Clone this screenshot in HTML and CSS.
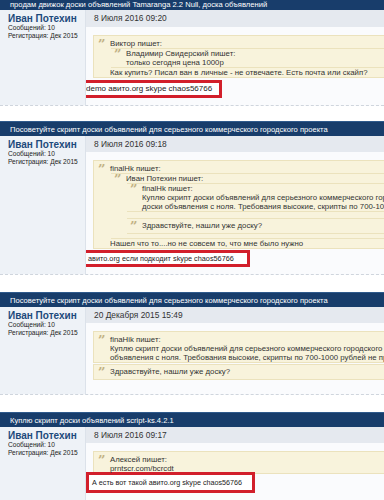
FILE: index.html
```html
<!DOCTYPE html>
<html lang="ru">
<head>
<meta charset="utf-8">
<link rel="stylesheet" href="styles.css">
</head>
<body>
<div class="page">

  <div class="post post1">
    <div class="thead thead-cut">продам движок доски объявлений Tamaranga 2.2 Null, доска объявлений</div>
    <div class="pbody">
      <div class="user">
        <div class="name">Иван Потехин</div>
        <div class="meta">Сообщений: 10</div>
        <div class="meta">Регистрация: Дек 2015</div>
      </div>
      <div class="main">
        <div class="date">8 Июля 2016 09:20</div>
        <div class="content">
          <div class="quote">
            <div class="qmark">”</div>
            <div class="qbody">
              <div class="line">Виктор пишет:</div>
              <div class="quote nested">
                <div class="qmark">”</div>
                <div class="qbody">
                  <div class="line">Владимир Свидерский пишет:</div>
                  <div class="line">только сегодня цена 1000р</div>
                </div>
              </div>
              <div class="line">Как купить? Писал ван в личные - не отвечаете. Есть почта или скайп?</div>
            </div>
          </div>
          <div class="msg msg1">demo авито.org skype chaos56766</div>
        </div>
      </div>
    </div>
  </div>

  <div class="post post2">
    <div class="thead">Посоветуйте скрипт доски объявлений для серьезного коммерческого городского проекта</div>
    <div class="pbody">
      <div class="user">
        <div class="name">Иван Потехин</div>
        <div class="meta">Сообщений: 10</div>
        <div class="meta">Регистрация: Дек 2015</div>
      </div>
      <div class="main">
        <div class="date">8 Июля 2016 09:18</div>
        <div class="content">
          <div class="quote q2">
            <div class="qmark">”</div>
            <div class="qbody">
              <div class="line">finalHk пишет:</div>
              <div class="quote nested n2">
                <div class="qmark">”</div>
                <div class="qbody">
                  <div class="line">Иван Потехин пишет:</div>
                  <div class="quote nested">
                    <div class="qmark">”</div>
                    <div class="qbody">
                      <div class="line">finalHk пишет:</div>
                      <div class="line">Куплю скрипт доски объявлений для серьезного коммерческого городского проекта</div>
                      <div class="line">доски объявления с ноля. Требования высокие, скрипты по 700-1000 рублей не предлагайте</div>
                    </div>
                  </div>
                  <div class="quote nested sep">
                    <div class="qmark">”</div>
                    <div class="qbody">
                      <div class="line">Здравствуйте, нашли уже доску?</div>
                    </div>
                  </div>
                </div>
              </div>
              <div class="line">Нашел что то....но не совсем то, что мне было нужно</div>
            </div>
          </div>
          <div class="msg msg2">авито.org если подкодит skype chaos56766</div>
        </div>
      </div>
    </div>
  </div>

  <div class="post post3">
    <div class="thead">Посоветуйте скрипт доски объявлений для серьезного коммерческого городского проекта</div>
    <div class="pbody">
      <div class="user">
        <div class="name">Иван Потехин</div>
        <div class="meta">Сообщений: 10</div>
        <div class="meta">Регистрация: Дек 2015</div>
      </div>
      <div class="main">
        <div class="date">20 Декабря 2015 15:49</div>
        <div class="content c3">
          <div class="quote q3">
            <div class="qmark">”</div>
            <div class="qbody">
              <div class="line">finaHik пишет:</div>
              <div class="line">Куплю скрипт доски объявлений для серьезного коммерческого городского проекта с</div>
              <div class="line">объявления с ноля. Требования высокие, скрипты по 700-1000 рублей не предлагайте</div>
            </div>
          </div>
          <div class="quote q3b">
            <div class="qmark">”</div>
            <div class="qbody">
              <div class="line">Здравствуйте, нашли уже доску?</div>
            </div>
          </div>
        </div>
      </div>
    </div>
  </div>

  <div class="post post4">
    <div class="thead">Куплю скрипт доски объявлений script-ks.4.2.1</div>
    <div class="pbody">
      <div class="user">
        <div class="name">Иван Потехин</div>
        <div class="meta">Сообщений: 10</div>
        <div class="meta">Регистрация: Дек 2015</div>
      </div>
      <div class="main">
        <div class="date">8 Июля 2016 09:17</div>
        <div class="content">
          <div class="quote q4">
            <div class="qmark">”</div>
            <div class="qbody">
              <div class="line">Алексей пишет:</div>
              <div class="line">prntscr.com/bcrcdt</div>
            </div>
          </div>
          <div class="msg msg4">А есть вот такой авито.org skype chaos56766</div>
        </div>
      </div>
    </div>
  </div>

</div>
</body>
</html>
```

FILE: styles.css
```css
* { box-sizing: border-box; }
html, body { margin: 0; padding: 0; background: #ffffff; }
body {
  width: 384px;
  height: 500px;
  overflow: hidden;
  font-family: "Liberation Sans", Arial, sans-serif;
  color: #2a2a2a;
}
.page { width: 384px; }

.post { margin-bottom: 15px; }
.post2 { margin-bottom: 17px; }
.post3 { margin-bottom: 17px; }

.thead {
  height: 15px;
  line-height: 15px;
  background: #183d6b;
  border-top: 1px solid #2f5a8c;
  color: #ffffff;
  font-size: 7.6px;
  padding-left: 10px;
  white-space: nowrap;
  overflow: hidden;
}
.thead-cut { height: 10px; line-height: 9px; border-top: 0; }

.pbody {
  display: grid;
  grid-template-columns: 86px 1fr;
  background: #fafbfd;
  border-bottom: 1px dashed #cfd5dd;
}
.user {
  background: #eef2f7;
  border-right: 1px solid #dce2ea;
  padding: 3px 0 0 8px;
}
.name {
  font-size: 10px;
  font-weight: bold;
  color: #1d4a7c;
  line-height: 11px;
  white-space: nowrap;
}
.meta {
  font-size: 6.6px;
  line-height: 8px;
  color: #222;
  white-space: nowrap;
}

.main { min-width: 0; overflow: hidden; }
.date {
  height: 16px;
  line-height: 16px;
  background: #e5e9ef;
  font-size: 8.4px;
  color: #333;
  padding-left: 8px;
}
.post1 .date { height: 17px; line-height: 17px; }

.content { padding: 8px 0 7px 7px; }
.c3 { padding-bottom: 14px; }

.quote {
  display: flex;
  background: #f8f3dc;
  border: 1px solid #ebe2bd;
  border-right: 0;
  padding: 3px 0 0 4px;
  font-size: 7.8px;
  line-height: 9px;
  color: #333;
}
.quote.nested {
  padding: 0 0 0 3px;
  border-left: 0;
  margin-left: 1px;
}
.quote.n2 { padding-bottom: 4px; }
.quote.sep { margin-top: 6px; padding: 2px 0 1px 3px; }
.q3b { margin-top: 1px; padding: 2px 0 1px 4px; }

.qmark {
  width: 12px;
  flex: none;
  font-family: "DejaVu Serif", serif;
  font-weight: bold;
  font-size: 13px;
  line-height: 11px;
  color: #c2b285;
}
.qbody { flex: 1; min-width: 0; }
.line { white-space: nowrap; }

.msg {
  display: block;
  border: 3px solid #d21f2b;
  background: #ffffff;
  font-size: 8px;
  color: #222;
  white-space: nowrap;
}
.msg1 { width: 142px; height: 18px; line-height: 12px; margin: 2px 0 0 -13px; padding-left: 3px; }
.msg2 { width: 167px; height: 17px; line-height: 11px; margin: 1px 0 0 -10px; padding-left: 2px; font-size: 7.3px; }
.msg4 { width: 169px; height: 21px; line-height: 15px; margin: -2px 0 0 -7px; padding-left: 3px; font-size: 7.2px; }
.q4 { padding-bottom: 0; }
```
